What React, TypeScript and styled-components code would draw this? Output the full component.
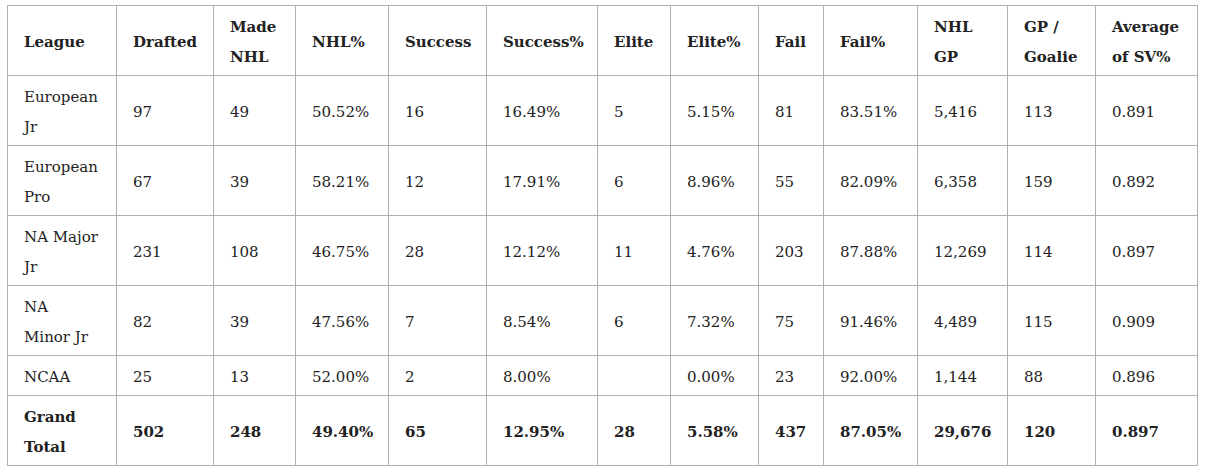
import React from 'react';
import styled, { createGlobalStyle } from 'styled-components';

const GlobalStyle = createGlobalStyle`
  body {
    margin: 0;
    background: #fff;
    color: #222;
    font-family: "DejaVu Serif", "Liberation Serif", serif;
  }
`;

const Wrapper = styled.div`
  padding: 5px 7px;
`;

const Table = styled.table`
  border-collapse: collapse;
  table-layout: fixed;
  width: 1191px;
  font-size: 15px;
  line-height: 30px;
`;

const Cell = styled.td<{ $bold?: boolean }>`
  border: 1px solid #b0b0b0;
  padding: 6px 10px 3px 16px;
  vertical-align: middle;
  text-align: left;
  font-weight: ${(p) => (p.$bold ? 700 : 400)};
`;

const HeadCell = styled(Cell).attrs({ as: 'th' })`
  font-weight: 700;
`;

const widths = [109, 97, 82, 93, 98, 111, 73, 88, 65, 94, 90, 88, 102];

// labels split where the original wraps them
const headers = [
  ['League'], ['Drafted'], ['Made', 'NHL'], ['NHL%'], ['Success'], ['Success%'], ['Elite'],
  ['Elite%'], ['Fail'], ['Fail%'], ['NHL', 'GP'], ['GP /', 'Goalie'], ['Average', 'of SV%'],
];

const rows = [
  [['European', 'Jr'], '97', '49', '50.52%', '16', '16.49%', '5', '5.15%', '81', '83.51%', '5,416', '113', '0.891'],
  [['European', 'Pro'], '67', '39', '58.21%', '12', '17.91%', '6', '8.96%', '55', '82.09%', '6,358', '159', '0.892'],
  [['NA Major', 'Jr'], '231', '108', '46.75%', '28', '12.12%', '11', '4.76%', '203', '87.88%', '12,269', '114', '0.897'],
  [['NA', 'Minor Jr'], '82', '39', '47.56%', '7', '8.54%', '6', '7.32%', '75', '91.46%', '4,489', '115', '0.909'],
  [['NCAA'], '25', '13', '52.00%', '2', '8.00%', '', '0.00%', '23', '92.00%', '1,144', '88', '0.896'],
];

const total = [['Grand', 'Total'], '502', '248', '49.40%', '65', '12.95%', '28', '5.58%', '437', '87.05%', '29,676', '120', '0.897'];

const Lines = ({ v }: { v: string | string[] }) =>
  Array.isArray(v) ? (
    <>
      {v.map((l, i) => (
        <React.Fragment key={i}>
          {i > 0 && <br />}
          {l}
        </React.Fragment>
      ))}
    </>
  ) : (
    <>{v}</>
  );

export default function App(): JSX.Element {
  return (
    <Wrapper>
      <GlobalStyle />
      <Table>
        <colgroup>
          {widths.map((w, i) => <col key={i} style={{ width: w }} />)}
        </colgroup>
        <thead>
          <tr>
            {headers.map((h, i) => <HeadCell key={i}><Lines v={h} /></HeadCell>)}
          </tr>
        </thead>
        <tbody>
          {rows.map((r, ri) => (
            <tr key={ri}>
              {r.map((v, i) => <Cell key={i}><Lines v={v} /></Cell>)}
            </tr>
          ))}
          <tr>
            {total.map((v, i) => <Cell key={i} $bold><Lines v={v} /></Cell>)}
          </tr>
        </tbody>
      </Table>
    </Wrapper>
  );
}
